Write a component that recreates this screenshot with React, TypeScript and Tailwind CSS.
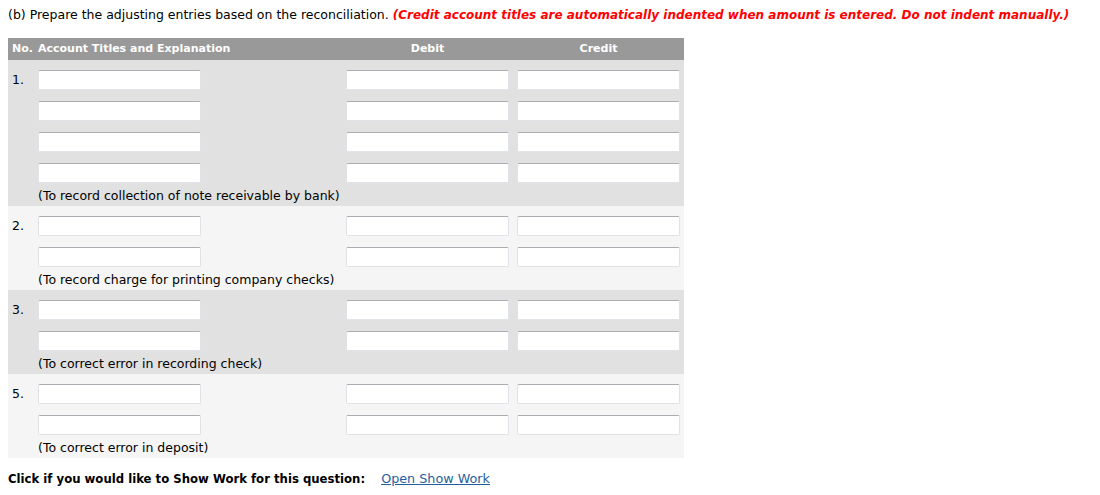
import React from "react";

type Entry = {
  no: string;
  lines: number;
  note: string;
  shade: string;
};

const entries: Entry[] = [
  { no: "1.", lines: 4, note: "(To record collection of note receivable by bank)", shade: "bg-[#e1e1e1]" },
  { no: "2.", lines: 2, note: "(To record charge for printing company checks)", shade: "bg-[#f5f5f5]" },
  { no: "3.", lines: 2, note: "(To correct error in recording check)", shade: "bg-[#e1e1e1]" },
  { no: "5.", lines: 2, note: "(To correct error in deposit)", shade: "bg-[#f5f5f5]" },
];

function Box() {
  return (
    <input
      type="text"
      className="block h-[20px] w-[163px] rounded-[2px] border border-[#dfe3e8] border-t-[#abadb3] bg-white outline-none"
    />
  );
}

export default function App() {
  return (
    <div className="min-h-screen bg-white px-2 pt-[8px] text-[12.5px] leading-[14px] text-black font-['DejaVu_Sans',sans-serif]">
      <p className="whitespace-nowrap">
        (b) Prepare the adjusting entries based on the reconciliation.{" "}
        <span className="text-[12px] font-bold italic text-[#ff0000]">
          (Credit account titles are automatically indented when amount is entered. Do not indent manually.)
        </span>
      </p>

      <div className="mt-[16px] w-[676px]">
        {/* header */}
        <div className="grid h-[22px] grid-cols-[26px_308px_171px_171px] items-center bg-[#999999] text-[11px] font-bold text-white">
          <div className="pl-1">No.</div>
          <div className="pl-1">Account Titles and Explanation</div>
          <div className="text-center">Debit</div>
          <div className="text-center">Credit</div>
        </div>

        {entries.map((e) => (
          <div key={e.no} className={`${e.shade} pt-[10px] pb-[3px]`}>
            <div className="flex flex-col gap-[11px]">
              {Array.from({ length: e.lines }).map((_, i) => (
                <div key={i} className="grid grid-cols-[26px_308px_171px_171px] items-center">
                  <div className="pl-1">{i === 0 ? e.no : ""}</div>
                  <div className="pl-1">
                    <Box />
                  </div>
                  <div className="pl-1">
                    <Box />
                  </div>
                  <div className="pl-1">
                    <Box />
                  </div>
                </div>
              ))}
            </div>
            <div className="mt-[6px] h-[14px] pl-[30px]">{e.note}</div>
          </div>
        ))}
      </div>

      <div className="mt-[14px] flex items-center whitespace-nowrap">
        <span className="text-[11.7px] font-bold">Click if you would like to Show Work for this question:</span>
        <a href="#" className="ml-4 text-[12.75px] text-[#1f5fa0] underline">
          Open Show Work
        </a>
      </div>
    </div>
  );
}
